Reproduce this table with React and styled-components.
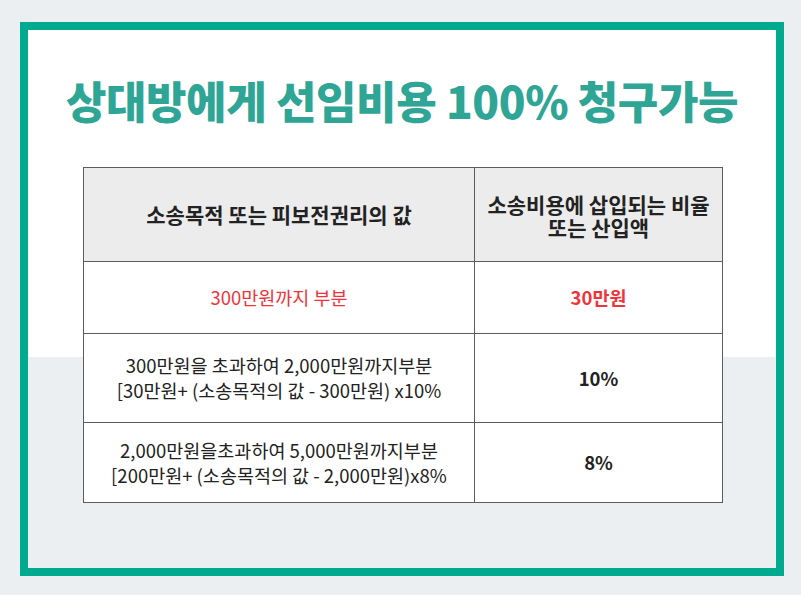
import React from 'react';
import styled, { createGlobalStyle } from 'styled-components';

const GlobalStyle = createGlobalStyle`
	html, body {
		margin: 0;
		padding: 0;
		background: #ebeff2;
	}
	body {
		font-family: "Noto Sans CJK KR", "Noto Sans", sans-serif;
	}
`;

const Page = styled.div`
	width: 801px;
	height: 595px;
	padding: 22px 0 0 20px;
	box-sizing: border-box;
`;

const Frame = styled.div`
	width: 764px;
	height: 554px;
	box-sizing: border-box;
	border: 8px solid #00aa8f;
	background: linear-gradient(to bottom, #fff 0, #fff 327px, #ebeff2 327px);
	display: flex;
	flex-direction: column;
	align-items: flex-start;
`;

const Title = styled.h1`
	align-self: stretch;
	margin: 0;
	padding-top: 40px;
	text-align: center;
	font-size: 44px;
	line-height: 60px;
	font-weight: 900;
	color: #2fa595;
	letter-spacing: -0.4px;
`;

const Table = styled.table`
	margin: 37px 0 0 55px;
	width: 639px;
	border-collapse: collapse;
	table-layout: fixed;
	color: #222;
`;

const Cell = styled.td`
	border: 1px solid #5c5c5c;
	text-align: center;
	vertical-align: middle;
	height: ${p => p.h}px;
	padding: 0;
	font-size: 18.5px;
	line-height: 25px;
	background: ${p => (p.head ? '#ececec' : '#fff')};
	font-weight: ${p => (p.bold ? 700 : 400)};
	color: ${p => (p.red ? '#f0333b' : '#222')};
`;

const HeadText = styled.div`
	font-size: 21px;
	font-weight: 700;
	line-height: 23px;
	padding-top: ${p => (p.pad ? '2px' : '0')};
`;

const rows = [
	{
		h: 71,
		left: ['300만원까지 부분'],
		right: '30만원',
		red: true
	},
	{
		h: 88,
		left: ['300만원을 초과하여 2,000만원까지부분', '[30만원+ (소송목적의 값 - 300만원) x10%'],
		right: '10%'
	},
	{
		h: 79,
		left: ['2,000만원을초과하여 5,000만원까지부분', '[200만원+ (소송목적의 값 - 2,000만원)x8%'],
		right: '8%'
	}
];

export default function App() {
	return (
		<>
			<GlobalStyle />
			<Page>
				<Frame>
					<Title>상대방에게 선임비용 100% 청구가능</Title>
					<Table>
						<colgroup>
							<col style={{ width: '391px' }} />
							<col style={{ width: '248px' }} />
						</colgroup>
						<tbody>
							<tr>
								<Cell head h={93}>
									<HeadText>소송목적 또는 피보전권리의 값</HeadText>
								</Cell>
								<Cell head h={93}>
									<HeadText pad>소송비용에 삽입되는 비율<br />또는 산입액</HeadText>
								</Cell>
							</tr>
							{rows.map((r, i) => (
								<tr key={i}>
									<Cell h={r.h} red={r.red}>
										{r.left.map((line, j) => (
											<div key={j}>{line}</div>
										))}
									</Cell>
									<Cell h={r.h} red={r.red} bold>
										{r.right}
									</Cell>
								</tr>
							))}
						</tbody>
					</Table>
				</Frame>
			</Page>
		</>
	);
}
